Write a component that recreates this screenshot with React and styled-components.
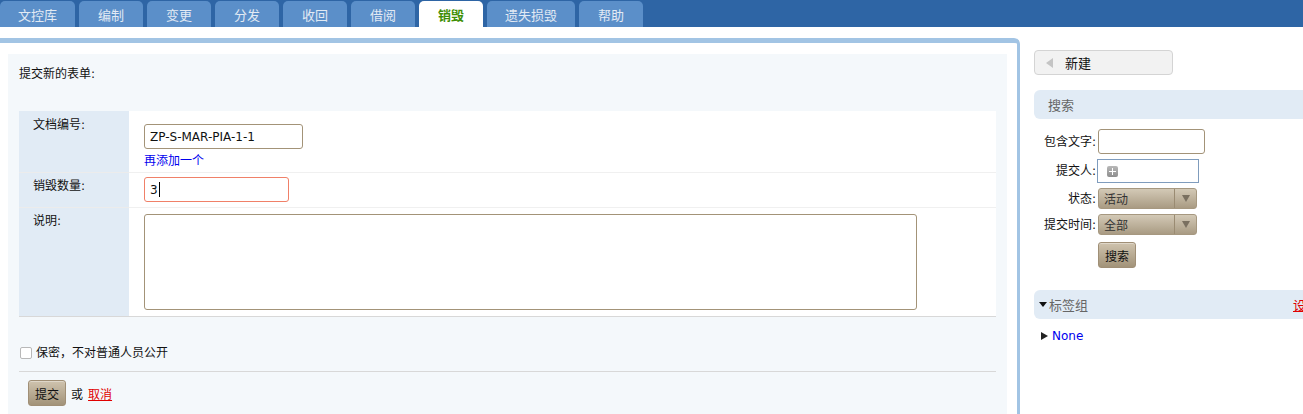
import React from "react";
import styled, { createGlobalStyle } from "styled-components";

const Global = createGlobalStyle`
  html, body { margin: 0; padding: 0; background: #fff; overflow: hidden; }
  body { font-family: "DejaVu Sans", "Noto Sans CJK SC", sans-serif; font-size: 12px; color: #111; }
  * { box-sizing: border-box; }
`;

const Page = styled.div`
  width: 1303px;
  height: 414px;
  overflow: hidden;
`;

const TabBar = styled.nav`
  display: flex;
  gap: 4px;
  height: 27px;
  background: #2e65a5;
  align-items: flex-end;
`;

const Tab = styled.div`
  height: ${p => (p.$active ? "27px" : "26px")};
  min-width: 64px;
  padding: 0 18px;
  display: flex;
  align-items: center;
  justify-content: center;
  border-radius: 5px 5px 0 0;
  background: ${p => (p.$active ? "#fff" : "#5b8fc9")};
  color: ${p => (p.$active ? "#3f8f06" : "#e2eaf4")};
  font-weight: ${p => (p.$active ? "bold" : "normal")};
  font-size: 13px;
  margin-top: 1px;
  align-self: flex-start;
`;

const Body = styled.div`
  display: flex;
  align-items: flex-start;
  gap: 14px;
`;

const MainPanel = styled.section`
  flex: 0 0 1020px;
  margin-top: 11px;
  border-top: 5px solid #a2c4e4;
  border-right: 3px solid #a2c4e4;
  border-top-right-radius: 6px;
  padding: 11px 10px 0 8px;
  height: 376px;
`;

const Inner = styled.div`
  background: #f4f8fb;
  padding: 11px 11px 0 11px;
  height: 100%;
`;

const Title = styled.div`
  height: 16px;
  line-height: 16px;
  margin-top: 1px;
  margin-bottom: 29px;
`;

const FormTable = styled.div`
  display: grid;
  grid-template-columns: 110px 1fr;
  border-bottom: 1px solid #d8d8d8;
  background: #fff;
`;

const Label = styled.div`
  background: #e1ebf5;
  padding: ${p => p.$pt}px 0 0 14px;
  line-height: 16px;
  border-bottom: ${p => (p.$last ? "none" : "1px solid #ececec")};
  height: ${p => p.$h}px;
`;

const Cell = styled.div`
  padding: ${p => p.$pt}px 0 0 15px;
  border-bottom: ${p => (p.$last ? "none" : "1px solid #f0f0f0")};
  height: ${p => p.$h}px;
`;

const TextInput = styled.div`
  width: ${p => p.$w}px;
  height: ${p => p.$hh || 25}px;
  border: 1px solid ${p => (p.$error ? "#f08068" : "#a39378")};
  border-radius: 3px;
  background: #fff;
  padding: 0 5px;
  display: flex;
  align-items: center;
  font-size: 12px;
  color: #111;
`;

const Caret = styled.span`
  display: inline-block;
  width: 1px;
  height: 15px;
  background: #000;
  margin-left: 1px;
`;

const AddLink = styled.a`
  display: block;
  color: #0000ee;
  margin-top: 4px;
  line-height: 16px;
  text-decoration: none;
  cursor: pointer;
`;

const TextArea = styled.div`
  width: 773px;
  height: 96px;
  border: 1px solid #a39378;
  border-radius: 3px;
  background: #fff;
`;

const CheckRow = styled.label`
  display: flex;
  align-items: center;
  gap: 4px;
  padding: 0 0 0 1px;
  margin-top: 28px;
  height: 16px;
  line-height: 16px;
`;

const CheckBox = styled.span`
  width: 12px;
  height: 12px;
  border: 1px solid #b8b8b8;
  border-radius: 2px;
  background: #fff;
`;

const Divider = styled.div`
  border-top: 1px solid #d8d8d8;
  margin-top: 10px;
`;

const ActionRow = styled.div`
  display: flex;
  align-items: center;
  gap: 5px;
  padding: 8px 0 0 9px;
`;

const BrownButton = styled.button`
  font-family: inherit;
  font-size: 12px;
  color: #111;
  height: 26px;
  padding: 0 6px;
  border: 1px solid #a08f76;
  border-radius: 3px;
  background: linear-gradient(#cfc3ae, #a29379);
  box-shadow: inset 0 1px 0 rgba(255,255,255,0.35);
  margin-top: ${p => p.$mt || 0}px;
`;

const RedLink = styled.a`
  color: #e00000;
  text-decoration: underline;
  cursor: pointer;
`;

const Sidebar = styled.aside`
  flex: 0 0 300px;
  padding-top: 23px;
`;

const NewButton = styled.div`
  width: 139px;
  height: 25px;
  border: 1px solid #d4d4d4;
  border-radius: 4px;
  background: #f2f2f2;
  display: flex;
  align-items: center;
  padding-left: 11px;
  gap: 12px;
  font-size: 13px;
  color: #111;
`;

const Triangle = styled.span`
  width: 0;
  height: 0;
  border-top: 5px solid transparent;
  border-bottom: 5px solid transparent;
  border-right: 7px solid #c4c4c4;
`;

const SectionHead = styled.div`
  margin-top: ${p => p.$mt}px;
  height: 29px;
  background: #e1ebf5;
  border-radius: 6px 0 0 6px;
  display: flex;
  align-items: center;
  padding-left: ${p => p.$pl}px;
  font-size: 13px;
  color: #666;
  position: relative;
`;

const HeadRight = styled.a`
  position: absolute;
  left: 259px;
  color: #e00000;
  text-decoration: underline;
  font-size: 13px;
`;

const DownTri = styled.span`
  width: 0;
  height: 0;
  border-left: 4px solid transparent;
  border-right: 4px solid transparent;
  border-top: 5px solid #111;
  margin-right: 2px;
`;

const SearchForm = styled.div`
  display: grid;
  grid-template-columns: 62px auto;
  column-gap: 2px;
  row-gap: 5px;
  align-items: center;
  justify-items: start;
  margin-top: 10px;
`;

const FormLabel = styled.span`
  justify-self: end;
  line-height: 16px;
`;

const PersonBox = styled.div`
  width: 102px;
  height: 24px;
  border: 1px solid #7f9cbd;
  background: #fff;
  display: flex;
  align-items: center;
  padding-left: 9px;
  margin-left: -1px;
`;

const PlusIcon = styled.span`
  width: 11px;
  height: 11px;
  border-radius: 2px;
  background: linear-gradient(#b8b8b8, #8e8e8e);
  position: relative;
  &::before, &::after {
    content: "";
    position: absolute;
    background: #fff;
  }
  &::before { left: 2px; right: 2px; top: 5px; height: 1px; }
  &::after { top: 2px; bottom: 2px; left: 5px; width: 1px; }
`;

const Select = styled.div`
  width: 99px;
  height: 21px;
  border: 1px solid #a69880;
  border-radius: 3px;
  background: linear-gradient(#d3c9b6, #a99b83);
  display: flex;
  align-items: stretch;
  font-size: 12px;
  color: #333;
`;

const SelectText = styled.span`
  flex: 1;
  display: flex;
  align-items: center;
  padding-left: 5px;
`;

const SelectArrow = styled.span`
  width: 22px;
  border-left: 1px solid #9a8b72;
  display: flex;
  align-items: center;
  justify-content: center;
  &::after {
    content: "";
    border-left: 4px solid transparent;
    border-right: 4px solid transparent;
    border-top: 7px solid #7a7060;
  }
`;

const TreeItem = styled.div`
  display: flex;
  align-items: center;
  gap: 4px;
  padding-left: 7px;
  margin-top: 9px;
  line-height: 16px;
`;

const RightTri = styled.span`
  width: 0;
  height: 0;
  border-top: 4px solid transparent;
  border-bottom: 4px solid transparent;
  border-left: 7px solid #222;
`;

const BlueLink = styled.a`
  color: #0000ee;
  text-decoration: none;
`;

const tabs = ["文控库", "编制", "变更", "分发", "收回", "借阅", "销毁", "遗失损毁", "帮助"];

export default function App() {
  return (
    <Page>
      <Global />
      <TabBar>
        {tabs.map(t => (
          <Tab key={t} $active={t === "销毁"}>{t}</Tab>
        ))}
      </TabBar>
      <Body>
        <MainPanel>
          <Inner>
            <Title>提交新的表单:</Title>
            <FormTable>
              <Label $pt={6} $h={62}>文档编号:</Label>
              <Cell $pt={13} $h={62}>
                <TextInput $w={159}>ZP-S-MAR-PIA-1-1</TextInput>
                <AddLink>再添加一个</AddLink>
              </Cell>
              <Label $pt={5} $h={35}>销毁数量:</Label>
              <Cell $pt={4} $h={35}>
                <TextInput $w={145} $error>3<Caret /></TextInput>
              </Cell>
              <Label $pt={5} $h={108} $last>说明:</Label>
              <Cell $pt={6} $h={108} $last>
                <TextArea />
              </Cell>
            </FormTable>
            <CheckRow>
              <CheckBox />
              保密，不对普通人员公开
            </CheckRow>
            <Divider />
            <ActionRow>
              <BrownButton>提交</BrownButton>
              <span>或</span>
              <RedLink>取消</RedLink>
            </ActionRow>
          </Inner>
        </MainPanel>
        <Sidebar>
          <NewButton>
            <Triangle />
            新建
          </NewButton>
          <SectionHead $mt={15} $pl={14}>搜索</SectionHead>
          <SearchForm>
            <FormLabel>包含文字:</FormLabel>
            <TextInput $w={107}></TextInput>
            <FormLabel>提交人:</FormLabel>
            <PersonBox><PlusIcon /></PersonBox>
            <FormLabel>状态:</FormLabel>
            <Select><SelectText>活动</SelectText><SelectArrow /></Select>
            <FormLabel>提交时间:</FormLabel>
            <Select><SelectText>全部</SelectText><SelectArrow /></Select>
            <span />
            <BrownButton $mt={2}>搜索</BrownButton>
          </SearchForm>
          <SectionHead $mt={22} $pl={5}>
            <DownTri />
            标签组
            <HeadRight>设置</HeadRight>
          </SectionHead>
          <TreeItem>
            <RightTri />
            <BlueLink>None</BlueLink>
          </TreeItem>
        </Sidebar>
      </Body>
    </Page>
  );
}
